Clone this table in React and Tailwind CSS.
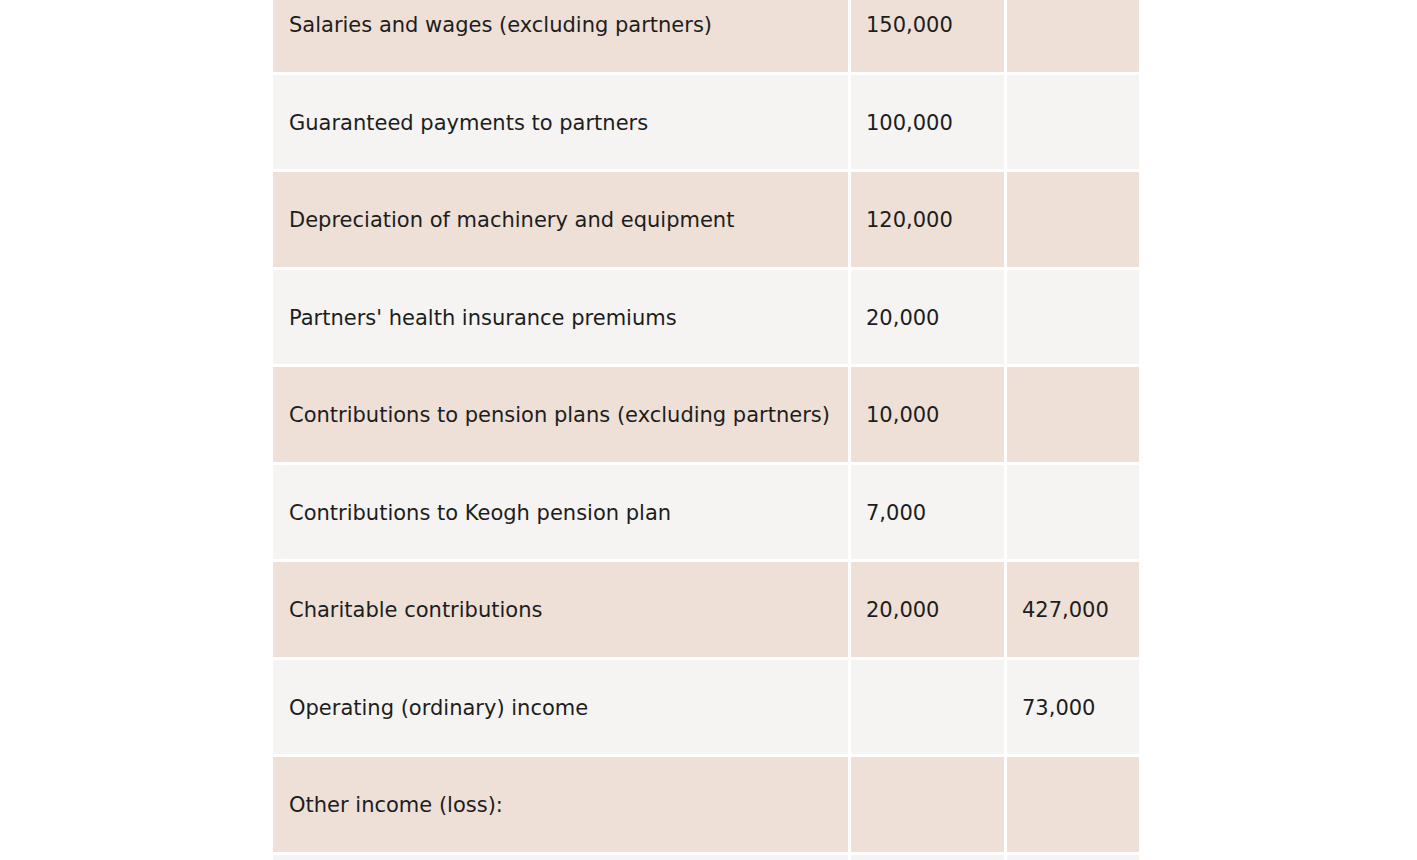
import React from "react";

const rows = [
  { label: "Salaries and wages (excluding partners)", a: "150,000", b: "" },
  { label: "Guaranteed payments to partners", a: "100,000", b: "" },
  { label: "Depreciation of machinery and equipment", a: "120,000", b: "" },
  { label: "Partners' health insurance premiums", a: "20,000", b: "" },
  { label: "Contributions to pension plans (excluding partners)", a: "10,000", b: "" },
  { label: "Contributions to Keogh pension plan", a: "7,000", b: "" },
  { label: "Charitable contributions", a: "20,000", b: "427,000" },
  { label: "Operating (ordinary) income", a: "", b: "73,000" },
  { label: "Other income (loss):", a: "", b: "" },
  { label: "", a: "", b: "" },
];

export default function App() {
  return (
    <div className="h-screen bg-white overflow-hidden">
      <div
        className="ml-[273px] mt-[-23px] grid w-[866px] grid-cols-[575px_153px_132px] gap-[3px] text-[21px] text-[#1d1d1d]"
        style={{ fontFamily: '"DejaVu Sans", Verdana, sans-serif' }}
      >
        {rows.map((row, i) => {
          const bg = i % 2 === 0 ? "bg-[#eee0d6]" : "bg-[#f5f4f2]";
          return (
            <React.Fragment key={i}>
              <div className={`${bg} flex h-[94.5px] items-center pl-4 pr-2 pt-[3px] whitespace-nowrap`}>{row.label}</div>
              <div className={`${bg} flex h-[94.5px] items-center pl-[15px] pt-[3px]`}>{row.a}</div>
              <div className={`${bg} flex h-[94.5px] items-center pl-[15px] pt-[3px]`}>{row.b}</div>
            </React.Fragment>
          );
        })}
      </div>
    </div>
  );
}
